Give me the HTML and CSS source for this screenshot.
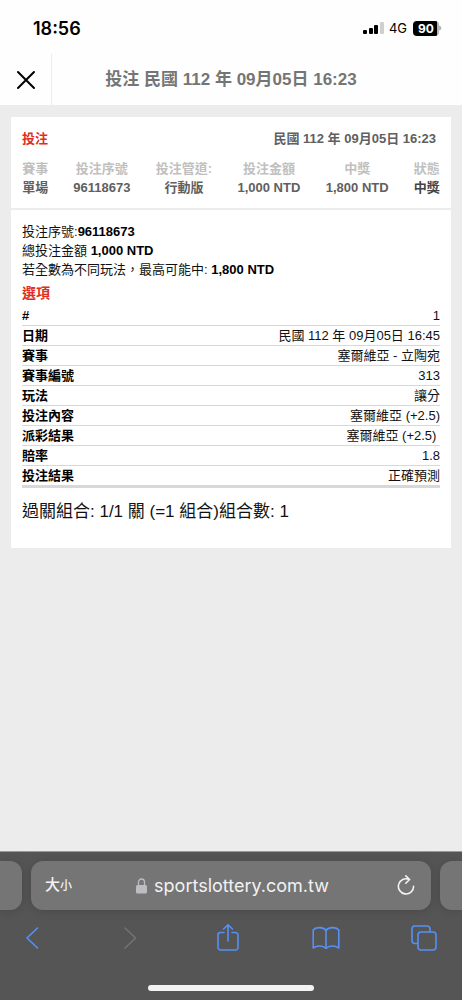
FILE: index.html
```html
<!DOCTYPE html>
<html lang="zh-Hant">
<head>
    <meta charset="UTF-8">
    <meta name="viewport" content="width=device-width, initial-scale=1.0">
    <title>投注</title>
    <link rel="stylesheet" href="styles.css">
</head>
<body>

    <!-- Status bar -->
    <div class="status-bar">
        <span class="time">18:56</span>
        <div class="status-icons">
            <svg width="21" height="14" viewBox="0 0 21 14">
                <rect x="0" y="9" width="4" height="4" rx="1"/>
                <rect x="6" y="7" width="4" height="6" rx="1"/>
                <rect x="11" y="4" width="4" height="9" rx="1"/>
                <rect x="17" y="1" width="4" height="12" rx="1" fill="#cfcfcf"/>
            </svg>
            <span class="network">4G</span>
            <span class="battery">90</span>
            <svg class="battery-tip" width="3" height="6" viewBox="0 0 3 6"><path d="M0 0.5Q2.5 1 2.5 3T0 5.5Z" fill="#b5b5b5"/></svg>
        </div>
    </div>

    <!-- Header -->
    <header class="header">
        <button class="close-btn" aria-label="關閉">
            <svg width="20" height="20" viewBox="0 0 20 20" fill="none" stroke="#000" stroke-width="2" stroke-linecap="round"><path d="M2 2L18 18M18 2L2 18"/></svg>
        </button>
        <h1>投注 民國 112 年 09月05日 16:23</h1>
    </header>

    <main class="content">
        <section class="card summary">
            <div class="summary-top">
                <h2>投注</h2>
                <span>民國 112 年 09月05日 16:23</span>
            </div>
            <table class="summary-table">
                <thead>
                    <tr><th>賽事</th><th>投注序號</th><th>投注管道:</th><th>投注金額</th><th>中獎</th><th>狀態</th></tr>
                </thead>
                <tbody>
                    <tr><td>單場</td><td>96118673</td><td>行動版</td><td>1,000 NTD</td><td>1,800 NTD</td><td class="result">中獎</td></tr>
                </tbody>
            </table>
        </section>

        <section class="card details">
            <p>投注序號:<strong>96118673</strong></p>
            <p>總投注金額 <strong>1,000 NTD</strong></p>
            <p>若全數為不同玩法，最高可能中: <strong>1,800 NTD</strong></p>
            <h3>選項</h3>
            <table class="options">
                <tr><th>#</th><td>1</td></tr>
                <tr><th>日期</th><td>民國 112 年 09月05日 16:45</td></tr>
                <tr><th>賽事</th><td>塞爾維亞 - 立陶宛</td></tr>
                <tr><th>賽事編號</th><td>313</td></tr>
                <tr><th>玩法</th><td>讓分</td></tr>
                <tr><th>投注內容</th><td>塞爾維亞 (+2.5)</td></tr>
                <tr><th>派彩結果</th><td>塞爾維亞 (+2.5)&nbsp;</td></tr>
                <tr><th>賠率</th><td>1.8</td></tr>
                <tr><th>投注結果</th><td>正確預測</td></tr>
            </table>
            <p class="combo">過關組合: 1/1 關 (=1 組合)組合數: 1</p>
        </section>
    </main>

    <!-- Browser bar -->
    <footer class="browser">
        <div class="address-row">
            <div class="side-tab left"></div>
            <div class="address">
                <button class="text-size" aria-label="大小">大<small>小</small></button>
                <a class="url" href="#">
                    <svg width="11" height="16" viewBox="0 0 11 16"><path d="M2.5 8V4.5a3 3.5 0 0 1 6 0V8" fill="none" stroke="#bdbcc2" stroke-width="1.3"/><rect x="0" y="7" width="11" height="8.5" rx="1.5" fill="#bdbcc2"/></svg>
                    sportslottery.com.tw
                </a>
                <button aria-label="重新整理">
                    <svg width="18" height="22" viewBox="0 0 18 22" fill="none" stroke="#f2f2f2" stroke-width="1.6" stroke-linecap="round" stroke-linejoin="round"><path d="M12 4.4A7.6 7.6 0 1 0 16.6 11.4M8.8 0.9L12.6 4.5L8.8 8.2"/></svg>
                </button>
            </div>
            <div class="side-tab right"></div>
        </div>
        <nav class="toolbar">
            <button aria-label="上一頁"><svg width="14" height="30" viewBox="0 0 14 30"><path d="M12.5 5L2 15L12.5 25"/></svg></button>
            <button class="off" aria-label="下一頁" disabled><svg width="14" height="30" viewBox="0 0 14 30"><path d="M2 5L12.5 15L2 25"/></svg></button>
            <button aria-label="分享"><svg width="22" height="30" viewBox="0 0 22 30"><path d="M7 9.5H3.5A2.5 2.5 0 0 0 1 12V24.5A2.5 2.5 0 0 0 3.5 27H18.5A2.5 2.5 0 0 0 21 24.5V12A2.5 2.5 0 0 0 18.5 9.5H15M11 18V2M6.5 6L11 1.8L15.5 6"/></svg></button>
            <button aria-label="書籤"><svg width="28" height="30" viewBox="0 0 28 30"><path d="M14 7.5C11.5 3.8 4.5 3.8 1.2 6.8V25C5 22.3 11 22.3 14 25.5C17 22.3 23 22.3 26.8 25V6.8C23.5 3.8 16.5 3.8 14 7.5V25.5"/></svg></button>
            <button aria-label="分頁"><svg width="26" height="30" viewBox="0 0 26 30"><path d="M6.5 20.5H4A3 3 0 0 1 1 17.5V6A3 3 0 0 1 4 3H16A3 3 0 0 1 19 6V8.5"/><rect x="7" y="9" width="18" height="18" rx="3"/></svg></button>
        </nav>
        <div class="home-bar"></div>
    </footer>

</body>
</html>
```

FILE: styles.css
```css
* {
    box-sizing: border-box;
}

body {
    margin: 0;
    min-height: 100vh;
    display: flex;
    flex-direction: column;
    background-color: #ececec;
    color: #111;
    font-family: "Liberation Sans", "Noto Sans CJK TC", sans-serif;
    font-size: 13px;
    line-height: 19px;
}

h1, h2, h3, p {
    margin: 0;
}

button {
    padding: 0;
    border: none;
    background: none;
    font: inherit;
    cursor: pointer;
}

svg {
    display: block;
}

table {
    width: 100%;
    border-collapse: collapse;
}

th, td {
    padding: 0;
}

/* Status bar */
.status-bar {
    display: flex;
    justify-content: space-between;
    align-items: center;
    height: 54px;
    padding: 2px 20px 0 33px;
    background-color: #fefefe;
    color: #000;
    font-family: Inter, sans-serif;
}

.time {
    font-size: 18px;
    font-weight: 600;
}

.status-icons {
    display: flex;
    align-items: center;
}

.network {
    margin: 0 6px 0 5px;
    font-size: 13px;
}

.battery {
    width: 26px;
    border-radius: 4px;
    background: linear-gradient(to right, #000 92%, #b5b5b5 92%);
    color: #fff;
    font-size: 12px;
    font-weight: 700;
    line-height: 15px;
    text-align: center;
}

/* Header */
.header {
    display: flex;
    height: 51px;
    background-color: #fefefe;
}

.close-btn {
    display: flex;
    justify-content: center;
    align-items: center;
    width: 52px;
    border-right: 1px solid #ececec;
}

.header h1 {
    flex: 1;
    padding: 1px 52px 0 0;
    color: #757575;
    font-size: 17px;
    line-height: 50px;
    text-align: center;
}

/* Cards */
.content {
    flex: 1;
    padding: 12px 11px;
}

.card {
    padding: 12px 11px 11px;
    background-color: #fff;
}

.summary {
    margin-bottom: 2px;
    color: #606060;
    font-weight: bold;
}

.summary-top {
    display: flex;
    justify-content: space-between;
    padding-right: 4px;
    margin-bottom: 11px;
}

.summary h2 {
    color: #e02d22;
    font-size: 13px;
}

.summary-table {
    text-align: center;
    white-space: nowrap;
}

.summary-table th, .summary-table td {
    padding: 0 12px;
}

.summary-table th {
    color: #c0c0c0;
}

.summary-table tr > :first-child {
    padding-left: 0;
}

.summary-table tr > :last-child {
    padding-right: 0;
}

.summary-table .result {
    color: #444;
}

.details {
    padding-bottom: 24px;
}

.details strong {
    color: #000;
}

.details h3 {
    margin: 5px 0 3px;
    color: #e02d22;
    font-size: 14px;
}

.options tr {
    border-bottom: 1px solid #d8d8d8;
}

.options tr:last-child {
    border-bottom: 3px solid #d8d8d8;
}

.options th {
    color: #000;
    text-align: left;
}

.options td {
    text-align: right;
}

.details .combo {
    margin-top: 12px;
    font-size: 17px;
    line-height: 24px;
}

/* Browser bar */
.browser {
    border-top: 1px solid #999;
    background-color: #555;
}

.address-row {
    display: flex;
    gap: 9px;
    padding-top: 9px;
}

.side-tab, .address {
    height: 49px;
    background-color: #757575;
    box-shadow: 0 1px 10px rgba(0, 0, 0, 0.15);
}

.side-tab {
    width: 22px;
}

.left {
    border-radius: 0 12px 12px 0;
}

.right {
    border-radius: 12px 0 0 12px;
}

.address {
    flex: 1;
    display: flex;
    justify-content: space-between;
    align-items: center;
    padding: 0 16px 0 14px;
    border-radius: 12px;
}

.text-size {
    color: #f2f2f2;
    font-size: 15px;
    font-weight: 500;
}

.text-size small {
    font-size: 12px;
}

.url {
    display: flex;
    align-items: center;
    gap: 7px;
    padding-right: 4px;
    color: #f2f2f2;
    font-family: Inter, sans-serif;
    font-size: 18px;
    text-decoration: none;
}

.toolbar {
    display: flex;
    justify-content: space-between;
    padding: 13px 24px 0 18px;
}

.toolbar button {
    display: flex;
    justify-content: center;
    width: 28px;
}

.toolbar svg {
    fill: none;
    stroke: #5690f5;
    stroke-width: 1.6;
    stroke-linecap: round;
    stroke-linejoin: round;
}

.toolbar .off svg {
    stroke: #737373;
}

.home-bar {
    width: 36%;
    height: 6px;
    margin: 32px auto 9px;
    border-radius: 3px;
    background-color: #f2f2f2;
}
```
